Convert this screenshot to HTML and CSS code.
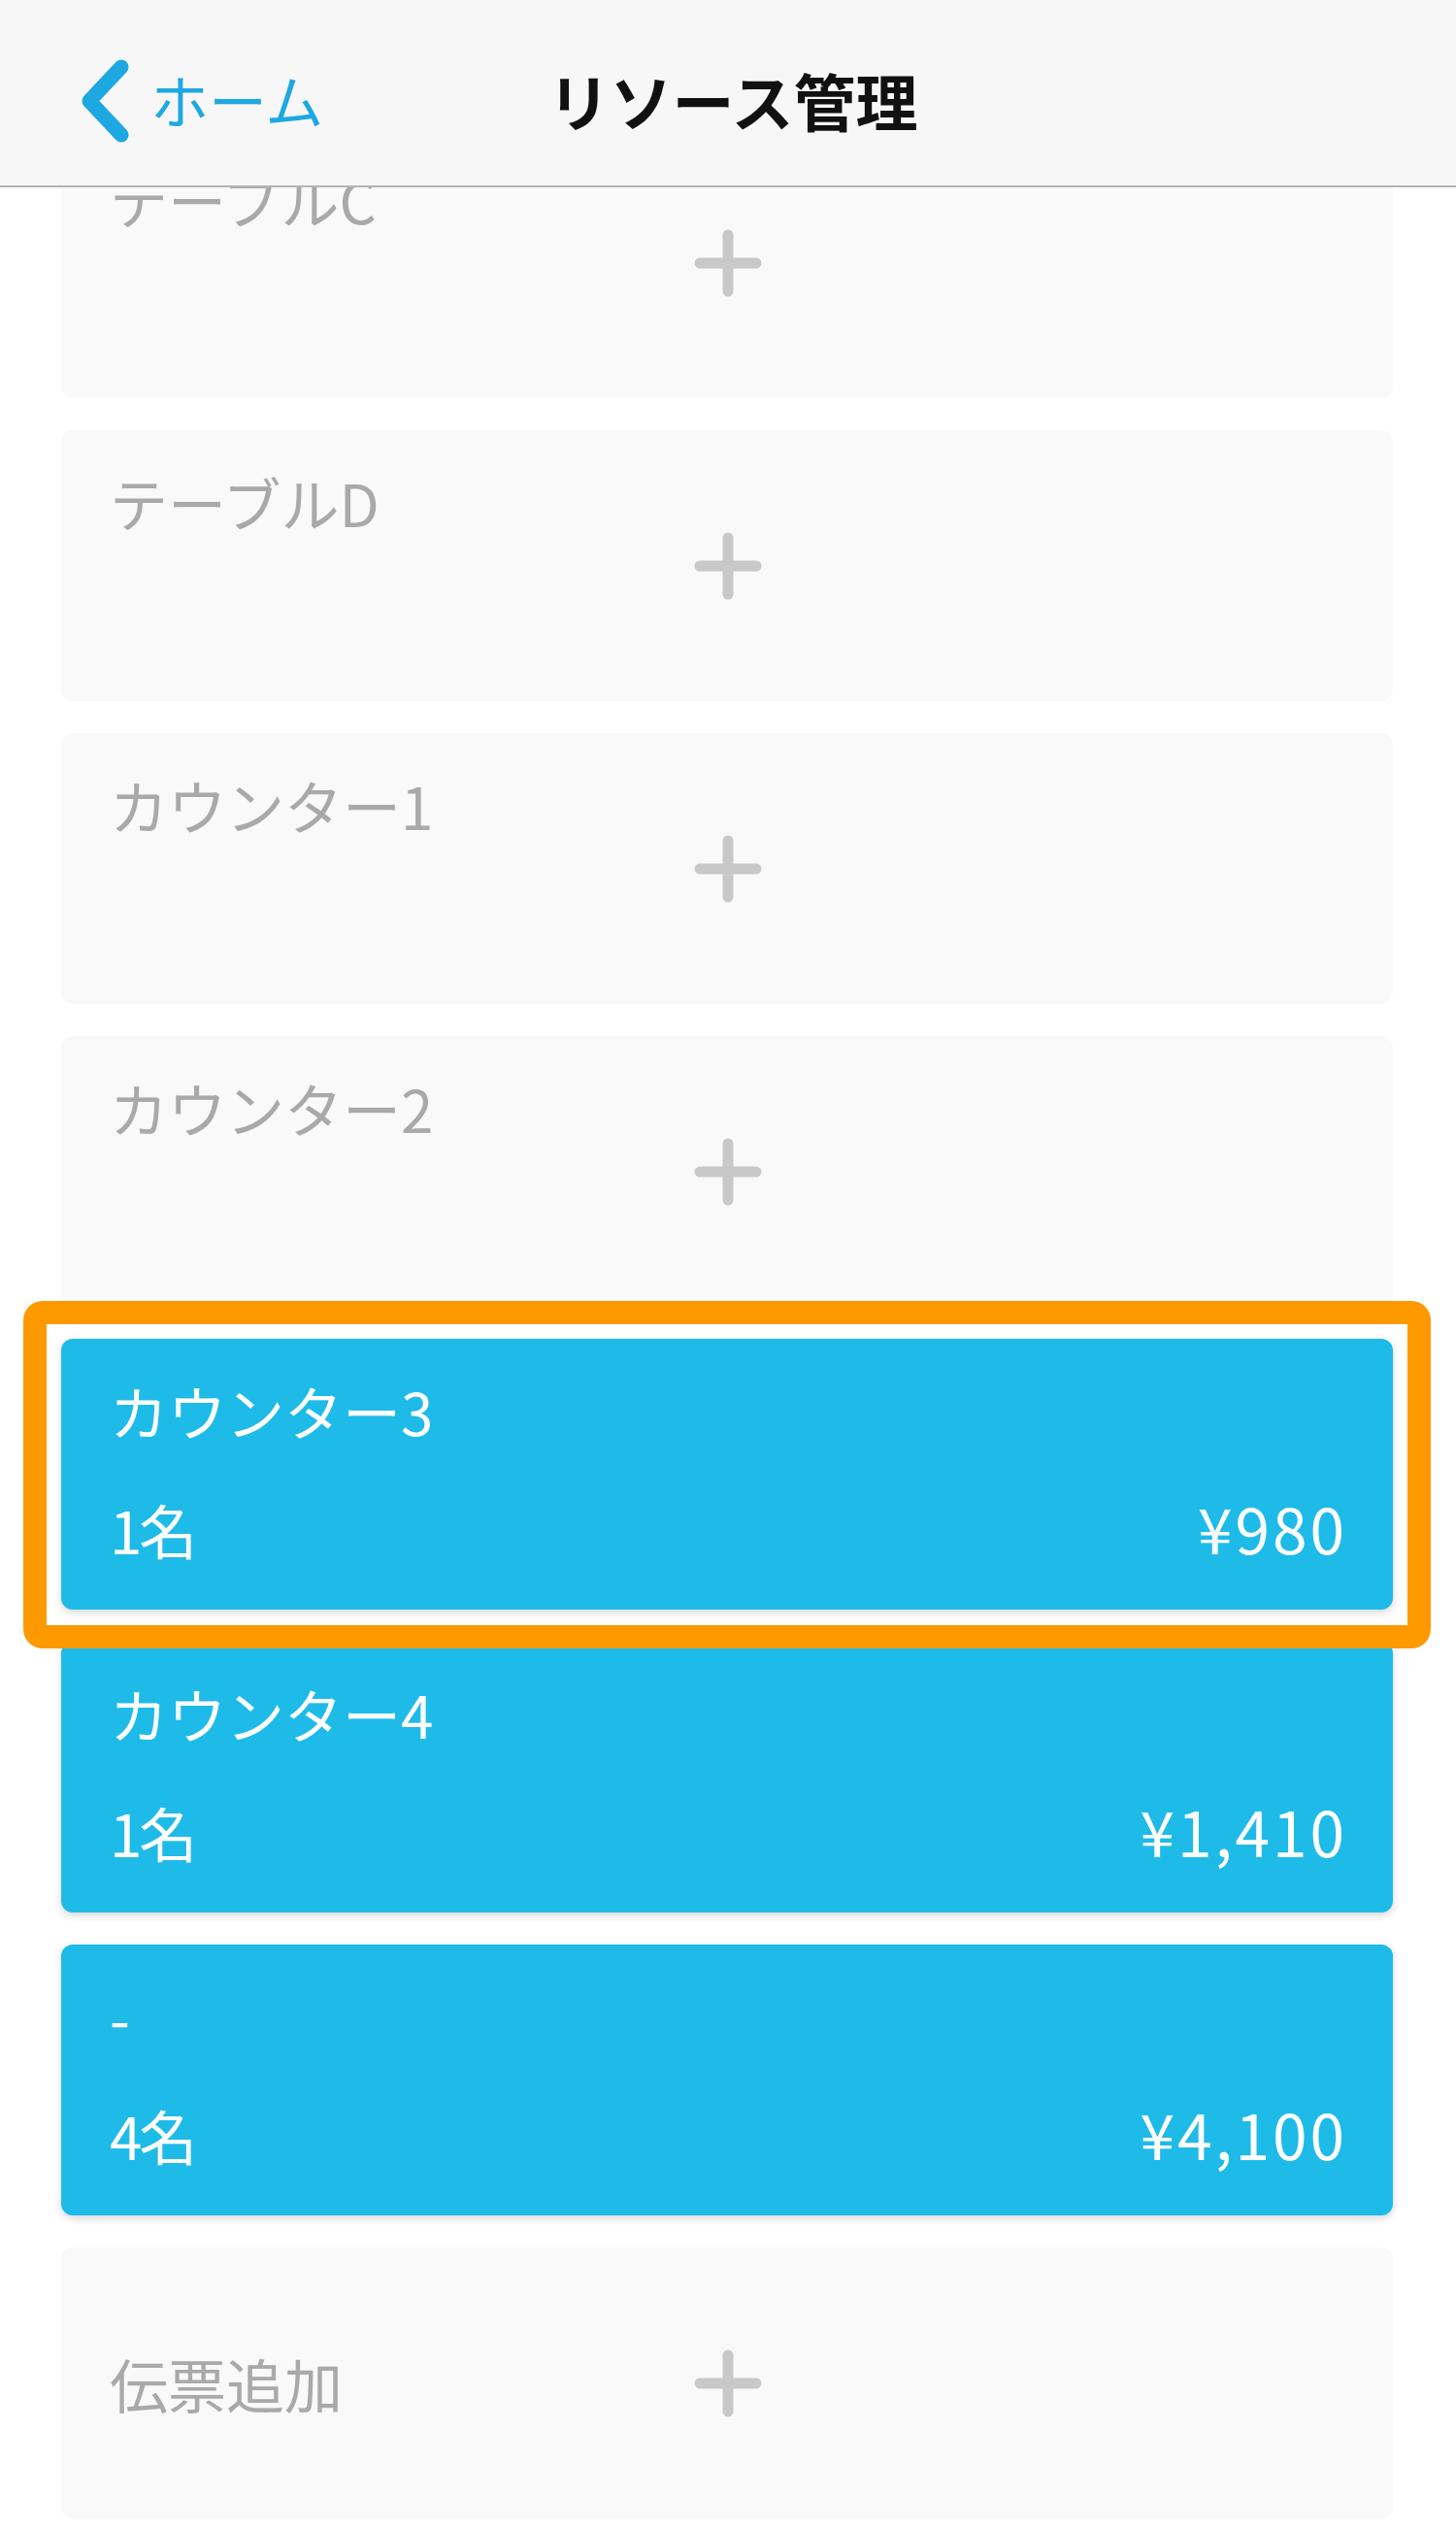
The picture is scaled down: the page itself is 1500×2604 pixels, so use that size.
FILE: index.html
```html
<!DOCTYPE html>
<html lang="ja">
<head>
<meta charset="utf-8">
<title>リソース管理</title>
<link rel="stylesheet" href="styles.css">
</head>
<body>
<header class="nav">
  <a class="back">
    <svg class="chevron" width="50" height="86" viewBox="0 0 50 86"><path d="M42 8 L9 43 L42 78" fill="none" stroke="#1ea8e2" stroke-width="15" stroke-linecap="round" stroke-linejoin="round"/></svg>
    <span class="back-label">ホーム</span>
  </a>
  <h1 class="title">リソース管理</h1>
  <div class="spacer"></div>
</header>
<main class="list">
  <div class="card empty first">
    <span class="name">テーブルC</span>
    <svg class="plus" width="70" height="70" viewBox="0 0 70 70"><path d="M35 6 V64 M6 35 H64" stroke="#c8c8c8" stroke-width="11" stroke-linecap="round"/></svg>
  </div>
  <div class="card empty">
    <span class="name">テーブルD</span>
    <svg class="plus" width="70" height="70" viewBox="0 0 70 70"><path d="M35 6 V64 M6 35 H64" stroke="#c8c8c8" stroke-width="11" stroke-linecap="round"/></svg>
  </div>
  <div class="card empty">
    <span class="name">カウンター1</span>
    <svg class="plus" width="70" height="70" viewBox="0 0 70 70"><path d="M35 6 V64 M6 35 H64" stroke="#c8c8c8" stroke-width="11" stroke-linecap="round"/></svg>
  </div>
  <div class="card empty">
    <span class="name">カウンター2</span>
    <svg class="plus" width="70" height="70" viewBox="0 0 70 70"><path d="M35 6 V64 M6 35 H64" stroke="#c8c8c8" stroke-width="11" stroke-linecap="round"/></svg>
  </div>
  <div class="card busy highlighted">
    <span class="name">カウンター3</span>
    <div class="meta"><span class="count">1名</span><span class="price">¥980</span></div>
    <div class="highlight"></div>
  </div>
  <div class="card busy">
    <span class="name">カウンター4</span>
    <div class="meta"><span class="count">1名</span><span class="price">¥1,410</span></div>
  </div>
  <div class="card busy">
    <span class="name">-</span>
    <div class="meta"><span class="count">4名</span><span class="price">¥4,100</span></div>
  </div>
  <div class="card empty add">
    <span class="name">伝票追加</span>
    <svg class="plus" width="70" height="70" viewBox="0 0 70 70"><path d="M35 6 V64 M6 35 H64" stroke="#c8c8c8" stroke-width="11" stroke-linecap="round"/></svg>
  </div>
</main>
</body>
</html>
```
FILE: styles.css
```css
* { box-sizing: border-box; }
html, body {
  margin: 0;
  padding: 0;
  background: #ffffff;
}
body {
  width: 1500px;
  height: 2604px;
  overflow: hidden;
  font-family: "Noto Sans CJK JP", "Noto Sans", sans-serif;
}
.nav {
  position: relative;
  z-index: 2;
  height: 193px;
  padding-top: 13px;
  background: #f7f7f7;
  border-bottom: 2px solid #b4b4b4;
  display: grid;
  grid-template-columns: 1fr auto 1fr;
  align-items: center;
}
.back {
  display: flex;
  align-items: center;
  gap: 22px;
  padding-left: 83px;
}
.chevron { display: block; margin-top: 4px; }
.back-label {
  font-size: 60px;
  line-height: 1;
  color: #1ea8e2;
}
.title {
  margin: 0;
  padding-left: 10px;
  font-size: 64px;
  line-height: 1;
  font-weight: 700;
  color: #111111;
}
.list {
  height: 2411px;
  overflow: hidden;
  padding: 0 65px 0 63px;
  display: flex;
  flex-direction: column;
  gap: 33px;
}
.card {
  flex: none;
  height: 279px;
  border-radius: 12px;
  padding: 44px 50px 53px 50px;
  font-size: 60px;
  line-height: 1;
}
.card.first { margin-top: -62px; }
.empty {
  background: #f9f9f9;
  color: #a9a9a9;
  display: grid;
  grid-template-areas: "stack";
  padding-bottom: 44px;
}
.empty > * { grid-area: stack; }
.empty .name { align-self: start; justify-self: start; }
.empty .plus { align-self: center; justify-self: center; margin-right: -2px; }
.empty.add .name { align-self: center; }
.busy {
  background: #1ebbe9;
  color: #ffffff;
  box-shadow: 0 3px 8px rgba(0, 0, 0, 0.16);
  display: flex;
  flex-direction: column;
  justify-content: space-between;
}
.meta {
  display: flex;
  justify-content: space-between;
  align-items: baseline;
}
.count { letter-spacing: -3px; }
.price {
  font-size: 64px;
  letter-spacing: 3px;
  margin-right: -3px;
}
.highlighted { position: relative; }
.highlight {
  position: absolute;
  top: -39px;
  left: -39px;
  right: -39px;
  bottom: -40px;
  border: 24px solid #ff9900;
  border-radius: 20px;
  pointer-events: none;
  z-index: 1;
}
```
